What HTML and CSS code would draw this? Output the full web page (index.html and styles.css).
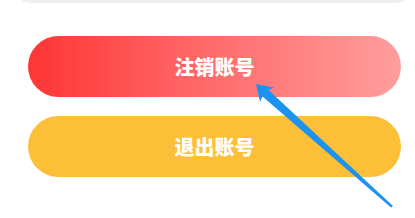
FILE: index.html
```html
<!DOCTYPE html>
<html lang="zh">
<head>
  <meta charset="UTF-8">
  <meta name="viewport" content="width=device-width, initial-scale=1.0">
  <title>账号设置</title>
  <link rel="stylesheet" href="styles.css">
</head>
<body>
  <!-- 上面的卡片（只露出底边） -->
  <div class="card-end"></div>

  <div class="actions">
    <button class="btn btn-cancel">注销账号</button>
    <button class="btn btn-logout">退出账号</button>
  </div>

  <!-- 标注箭头 -->
  <svg class="pointer" width="415" height="218" viewBox="0 0 415 218">
    <polygon points="256,84 274,87.5 268.5,90 393,206 391,207.5 262.5,96.5 260,102" fill="#1c93f0"/>
  </svg>
</body>
</html>
```

FILE: styles.css
```css
body {
  margin: 0;
  background: #ffffff;
  font-family: "Noto Sans CJK SC", "Noto Sans", sans-serif;
  position: relative;
  width: 415px;
  height: 218px;
  overflow: hidden;
}

.card-end {
  height: 3px;
  margin: 0 10px 0 22px;
  background-color: #efefef;
  border-radius: 0 0 12px 12px / 0 0 3px 3px;
}

.actions {
  display: flex;
  flex-direction: column;
  gap: 19px;
  padding: 33px 14px 0 28px;
}

.btn {
  display: block;
  width: 100%;
  height: 61px;
  border: none;
  border-radius: 31px;
  color: #ffffff;
  font-family: inherit;
  font-size: 20px;
  font-weight: 900;
  line-height: 61px;
  padding: 0;
}

.btn-cancel {
  background: linear-gradient(90deg, #fe3535 0%, #ff6262 40%, #ff9e9e 100%);
}

.btn-logout {
  background-color: #fdbf38;
}

/* 箭头盖在按钮上面 */
.pointer {
  position: absolute;
  left: 0;
  top: 0;
}
```
